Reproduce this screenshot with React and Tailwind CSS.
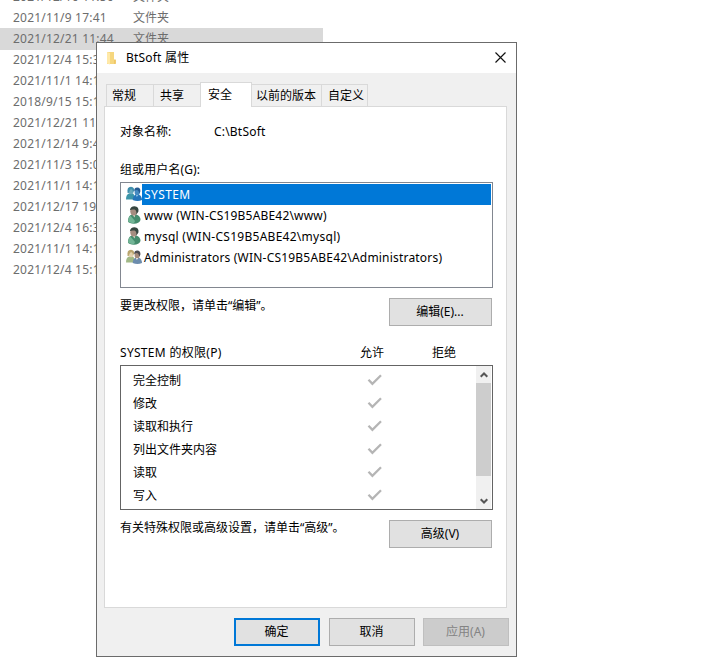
import React from "react";

const files = [
  ["2021/12/16 11:56", true],
  ["2021/11/9 17:41", true],
  ["2021/12/21 11:44", true],
  ["2021/12/4 15:35", false],
  ["2021/11/1 14:17", false],
  ["2018/9/15 15:19", false],
  ["2021/12/21 11:44", false],
  ["2021/12/14 9:45", false],
  ["2021/11/3 15:07", false],
  ["2021/11/1 14:17", false],
  ["2021/12/17 19:20", false],
  ["2021/12/4 16:35", false],
  ["2021/11/1 14:17", false],
  ["2021/12/4 15:19", false],
];

const permissions = ["完全控制", "修改", "读取和执行", "列出文件夹内容", "读取", "写入"];

function UserIcon() {
  return (
    <svg className="mb-px h-[18px] w-4 shrink-0" viewBox="0 0 16 18">
      <path d="M2 15.5 Q2 9.5 6 8.5 L10 8.5 Q14.5 9.5 14.5 14 Q13 17.8 8 17.8 Q3 17.5 2 15.5Z" fill="#458c6d" />
      <path d="M2.2 15 Q2.5 10.5 4.5 9.8 L9 15 L8 17.2 Q3 17 2.2 15Z" fill="#72b596" />
      <path d="M6 8 L9.5 8 L8.5 11.5Z" fill="#e4d7cc" />
      <ellipse cx="7.8" cy="5.2" rx="3.5" ry="4.2" fill="#a58d80" />
      <path d="M3.9 4.2 Q4.5 .2 8.5 .2 Q13.3 .8 12.4 5.4 L10.3 8.8 Q11 5 8.6 3.6 Q6 3 3.9 4.2Z" fill="#374640" />
    </svg>
  );
}

function GroupIcon({ selected }) {
  const c = selected
    ? { a: "#3c95a9", b: "#2575ba", h1: "#3f8eac", h2: "#245a92", f1: "#68a9bd", f2: "#458ac0" }
    : { a: "#a1b886", b: "#6c8cad", h1: "#b9a56e", h2: "#4b4b50", f1: "#e2d1ae", f2: "#a58b7b" };
  return (
    <svg className="mb-px h-[18px] w-4 shrink-0" viewBox="0 0 16 18">
      <path d="M0 14.5 Q0 9.5 3 8.5 L7 8.5 Q9 10 9 14.5Z" fill={c.a} />
      <path d="M6.7 15 Q7 10.5 9.5 9.7 L13 9.7 Q16 11 16 15 Q11.5 17 6.7 15Z" fill={c.b} />
      <ellipse cx="5" cy="5.8" rx="2.7" ry="3.5" fill={c.f1} />
      <path d="M1.6 8 Q.6 1.7 5 1.7 Q8.7 2 8 6 L6.8 7 Q7.2 4.5 5 4 Q3.5 5 2.7 8Z" fill={c.h1} />
      <ellipse cx="11.2" cy="7" rx="2.6" ry="3.5" fill={c.f2} />
      <path d="M8.3 6.2 Q7.8 2.6 11.3 2.5 Q15 2.7 14.3 7 L13 8.8 Q13.2 5.5 11 5 Q9.5 5 8.3 6.2Z" fill={c.h2} />
      <path d="M10 10 L12.2 10 L10.8 12Z" fill={selected ? "#8cc4e8" : "#f4efe9"} />
    </svg>
  );
}

const users = [
  { name: "SYSTEM", group: true, selected: true, spacing: "tracking-[0.4px]" },
  { name: "www (WIN-CS19B5ABE42\\www)", spacing: "tracking-[0.19px]" },
  { name: "mysql (WIN-CS19B5ABE42\\mysql)", spacing: "tracking-[0.27px]" },
  { name: "Administrators (WIN-CS19B5ABE42\\Administrators)", group: true, spacing: "tracking-[0.2px]" },
];

function Button({ children, className }) {
  return (
    <button className={"flex h-7 shrink-0 items-center justify-center pr-px " + className}>
      {children}
    </button>
  );
}

function Arrow({ down }) {
  return (
    <svg className={down ? "h-[6px] w-2 rotate-180" : "h-[6px] w-2"} viewBox="0 0 8 6">
      <path d="M.7 4.8 L4 1.5 L7.3 4.8" fill="none" stroke="#555" strokeWidth="2" />
    </svg>
  );
}

function SecurityPanel() {
  return (
    <div className="h-[502px] w-[403px] border border-[#d9d9d9] bg-white pl-[15px] pt-[15px]">
      <div className="flex h-5 items-center">
        <span className="w-[94px]">对象名称:</span>
        <span className="tracking-[0.2px]">C:\BtSoft</span>
      </div>
      <div className="mt-[18px] flex h-5 items-center tracking-[0.1px]">组或用户名(G):</div>
      <div className="mt-[2px] h-[106px] w-[373px] border border-[#828790] py-px pl-[5px] pr-px">
        {users.map((u) => (
          <div key={u.name} className="flex h-[21px] items-center">
            {u.group ? <GroupIcon selected={u.selected} /> : <UserIcon />}
            <div
              className={
                "flex h-[21px] grow items-center whitespace-pre pl-[2px] " +
                u.spacing +
                (u.selected ? " bg-[#0078d7] text-white" : "")
              }
            >
              {u.name}
            </div>
          </div>
        ))}
      </div>
      <div className="mt-[10px] flex w-[372px] justify-between">
        <span className="mt-[-2px] h-5 leading-5">要更改权限，请单击“编辑”。</span>
        <Button className="w-[103px] border border-[#adadad] bg-[#e1e1e1]">编辑(E)...</Button>
      </div>
      <div className="mt-[17px] flex h-5 items-center">
        <span className="w-[240px] tracking-[0.3px]">SYSTEM 的权限(P)</span>
        <span className="w-[72px]">允许</span>
        <span>拒绝</span>
      </div>
      <div className="mt-[2px] flex h-[145px] w-[373px] border border-[#646464] pr-px">
        <div className="grow overflow-hidden pl-3 pt-[3px]">
          {permissions.map((p) => (
            <div key={p} className="flex h-[23px] items-center">
              <span className="w-[234px]">{p}</span>
              <svg className="mb-px h-3 w-[15px]" viewBox="0 0 15 12">
                <path d="M1.5 5.7 L5.4 9.9 L14 1.2" fill="none" stroke="#b5b5b5" strokeWidth="2.3" />
              </svg>
            </div>
          ))}
        </div>
        <div className="flex w-[15px] flex-col items-center bg-[#f0f0f0]">
          <div className="flex h-[17px] items-center"><Arrow /></div>
          <div className="h-[93px] w-full bg-[#cdcdcd]" />
          <div className="mt-[16px] flex h-[17px] items-center"><Arrow down /></div>
        </div>
      </div>
      <div className="mt-[10px] flex w-[372px] justify-between">
        <span className="mt-[-2px] h-5 leading-5">有关特殊权限或高级设置，请单击“高级”。</span>
        <Button className="w-[103px] border border-[#adadad] bg-[#e1e1e1]">高级(V)</Button>
      </div>
    </div>
  );
}

function PropertiesDialog() {
  return (
    <section className="absolute left-[96px] top-[42px] h-[615px] w-[421px] border border-[#6b6b6b] bg-[#f0f0f0] text-[12px] text-black">
      <header className="flex h-[30px] items-center bg-white pl-[9px] pr-[9px]">
        <svg className="mb-px h-[14px] w-3" viewBox="0 0 12 14">
          <path d="M1 1 H8 V9 H9.8 V13 H1Z" fill="#f6d77f" />
          <path d="M1 1 L4 2 V13.5 L1 12.5Z" fill="#ffe9a8" />
          <path d="M8 8.5 H9.8 V12.5 L8 13Z" fill="#efc768" />
        </svg>
        <span className="ml-2 grow tracking-[0.2px]">BtSoft 属性</span>
        <svg className="mb-[2px] mr-px h-[11px] w-[11px]" viewBox="0 0 11 11">
          <path d="M.5 .5 L10.5 10.5 M10.5 .5 L.5 10.5" stroke="#111" strokeWidth="1.15" />
        </svg>
      </header>
      <div className="pl-[7px] pt-[9px]">
        <nav className="flex h-6 items-end pl-[2px]">
          <div className="flex h-[22px] w-[48px] items-center border border-b-0 border-[#d9d9d9] pl-[5px]">常规</div>
          <div className="flex h-[22px] w-[46px] items-center border-t border-[#d9d9d9] pl-[6px]">共享</div>
          <div className="relative -mb-px flex h-[25px] w-[52px] items-center border border-b-0 border-[#d9d9d9] bg-white pl-[7px]">安全</div>
          <div className="flex h-[22px] w-[70px] items-center border-r border-t border-[#d9d9d9] pl-[4px]">以前的版本</div>
          <div className="flex h-[22px] w-[46px] items-center border-r border-t border-[#d9d9d9] pl-[6px]">自定义</div>
        </nav>
        <SecurityPanel />
      </div>
      <footer className="mt-[10px] flex pl-[137px]">
        <Button className="w-[86px] border-2 border-[#0078d7] bg-[#e1e1e1]">确定</Button>
        <Button className="ml-[9px] w-[86px] border border-[#adadad] bg-[#e1e1e1]">取消</Button>
        <Button className="ml-2 w-[86px] border border-[#bfbfbf] bg-[#cccccc] text-[#838383]">应用(A)</Button>
      </footer>
    </section>
  );
}

export default function App() {
  return (
    <main className="relative h-[659px] w-[708px] overflow-hidden whitespace-nowrap bg-white font-['Noto_Sans','Noto_Sans_CJK_SC',sans-serif]">
      <div className="mt-[-14px] text-[12px] text-[#6d6d6d]">
        {files.map(([date, typed], i) => (
          <div
            key={i}
            className={
              "flex w-[323px] items-center pl-[13px] " +
              (i === 2 ? "-mb-px h-[22px] bg-[#d9d9d9] pb-px" : "h-[21px]")
            }
          >
            <span className="w-[120px] tracking-[0.2px]">{date}</span>
            {typed && <span>文件夹</span>}
          </div>
        ))}
      </div>
      <PropertiesDialog />
    </main>
  );
}
